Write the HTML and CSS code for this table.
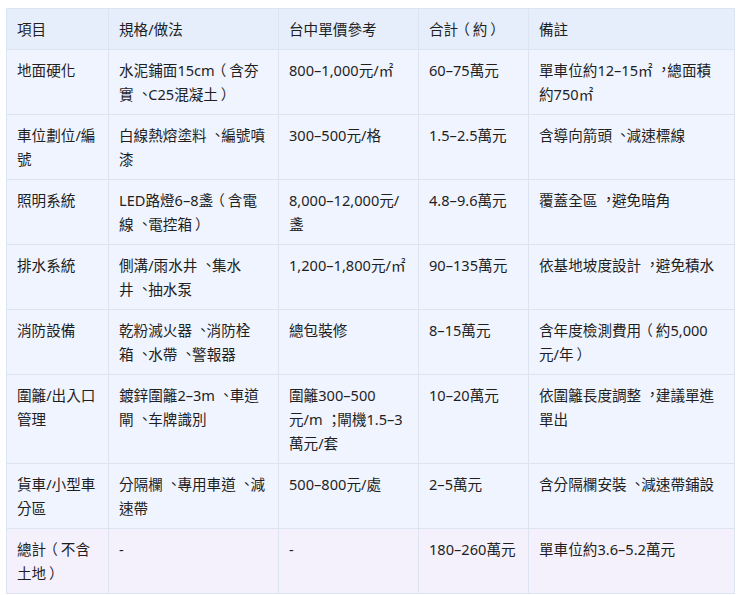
FILE: index.html
```html
<!DOCTYPE html>
<html lang="zh-Hant">
<head>
<meta charset="utf-8">
<link rel="stylesheet" href="styles.css">
</head>
<body>
<div class="wrap">
<table class="cost">
<colgroup>
<col class="c1"><col class="c2"><col class="c3"><col class="c4"><col class="c5">
</colgroup>
<thead>
<tr><th>項目</th><th>規格/做法</th><th>台中單價參考</th><th>合計<span class="op">（</span>約<span class="cp">）</span></th><th>備註</th></tr>
</thead>
<tbody>
<tr><td>地面硬化</td><td>水泥鋪面15cm<span class="op">（</span>含夯實<span class="dn">、</span>C25混凝土<span class="cp">）</span></td><td>800–1,000元/㎡</td><td>60–75萬元</td><td>單車位約12–15㎡<span class="cm">，</span>總面積約750㎡</td></tr>
<tr><td>車位劃位/編號</td><td>白線熱熔塗料<span class="dn">、</span>編號噴漆</td><td>300–500元/格</td><td>1.5–2.5萬元</td><td>含導向箭頭<span class="dn">、</span>減速標線</td></tr>
<tr><td>照明系統</td><td>LED路燈6–8盞<span class="op">（</span>含電線<span class="dn">、</span>電控箱<span class="cp">）</span></td><td>8,000–12,000元/盞</td><td>4.8–9.6萬元</td><td>覆蓋全區<span class="cm">，</span>避免暗角</td></tr>
<tr><td>排水系統</td><td>側溝/雨水井<span class="dn">、</span>集水井<span class="dn">、</span>抽水泵</td><td>1,200–1,800元/㎡</td><td>90–135萬元</td><td>依基地坡度設計<span class="cm">，</span>避免積水</td></tr>
<tr><td>消防設備</td><td>乾粉滅火器<span class="dn">、</span>消防栓箱<span class="dn">、</span>水帶<span class="dn">、</span>警報器</td><td>總包裝修</td><td>8–15萬元</td><td>含年度檢測費用<span class="op">（</span>約5,000元/年<span class="cp">）</span></td></tr>
<tr><td>圍籬/出入口管理</td><td>鍍鋅圍籬2–3m<span class="dn">、</span>車道閘<span class="dn">、</span>车牌識別</td><td>圍籬300–500元/m<span class="sc">；</span>閘機1.5–3萬元/套</td><td>10–20萬元</td><td>依圍籬長度調整<span class="cm">，</span>建議單進單出</td></tr>
<tr><td>貨車/小型車分區</td><td>分隔欄<span class="dn">、</span>專用車道<span class="dn">、</span>減速帶</td><td>500–800元/處</td><td>2–5萬元</td><td>含分隔欄安裝<span class="dn">、</span>減速帶鋪設</td></tr>
<tr class="total"><td>總計<span class="op">（</span>不含土地<span class="cp">）</span></td><td>-</td><td>-</td><td>180–260萬元</td><td>單車位約3.6–5.2萬元</td></tr>
</tbody>
</table>
</div>
</body>
</html>
```
FILE: styles.css
```css
html, body {
  margin: 0;
  padding: 0;
  background: #ffffff;
}
.wrap {
  padding: 8px 6px;
}
.cost {
  width: 728px;
  table-layout: fixed;
  border-collapse: collapse;
  font-family: "Noto Sans", "Noto Sans CJK TC", sans-serif;
  font-size: 14.6px;
  line-height: 24px;
  color: #1f1f1f;
  text-spacing-trim: space-all;
}
.c1 { width: 102px; }
.c2 { width: 170px; }
.c3 { width: 140px; }
.c4 { width: 110px; }
.c5 { width: 206px; }
.cost th, .cost td {
  border: 1px solid #dde4f1;
  padding: 8px 10px;
  text-align: left;
  vertical-align: top;
  font-weight: 400;
}
.cost th {
  background: #e6edfb;
}
.cost td {
  background: #eff4ff;
}
.cost .total td {
  background: #f5f1fc;
}
/* centre full-width punctuation in the em box (Traditional Chinese style) */
.op {
  margin-left: -0.2em;
  padding-right: 0.2em;
}
.cp {
  padding-left: 0.2em;
  margin-right: -0.2em;
}
.dn, .cm {
  padding-left: 0.26em;
  margin-right: -0.26em;
  line-height: 0;
}
.dn { vertical-align: 0.1em; }
.cm { vertical-align: 0.08em; }
.sc {
  padding-left: 0.28em;
  margin-right: -0.28em;
}
```
